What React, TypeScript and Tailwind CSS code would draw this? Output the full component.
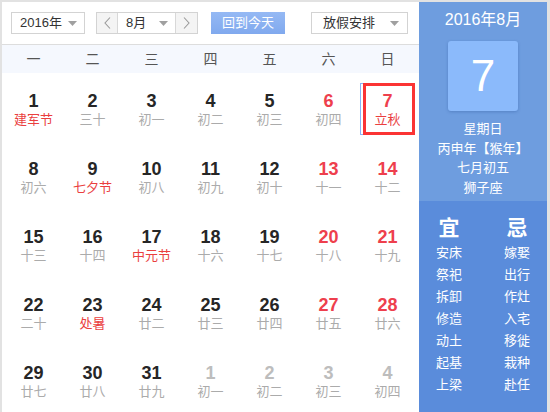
import React from "react";

type Cell = { d: number; l: string; numRed?: boolean; lRed?: boolean; gray?: boolean; sel?: boolean };

const rows: Cell[][] = [
  [
    { d: 1, l: "建军节", lRed: true },
    { d: 2, l: "三十" },
    { d: 3, l: "初一" },
    { d: 4, l: "初二" },
    { d: 5, l: "初三" },
    { d: 6, l: "初四", numRed: true },
    { d: 7, l: "立秋", numRed: true, lRed: true, sel: true },
  ],
  [
    { d: 8, l: "初六" },
    { d: 9, l: "七夕节", lRed: true },
    { d: 10, l: "初八" },
    { d: 11, l: "初九" },
    { d: 12, l: "初十" },
    { d: 13, l: "十一", numRed: true },
    { d: 14, l: "十二", numRed: true },
  ],
  [
    { d: 15, l: "十三" },
    { d: 16, l: "十四" },
    { d: 17, l: "中元节", lRed: true },
    { d: 18, l: "十六" },
    { d: 19, l: "十七" },
    { d: 20, l: "十八", numRed: true },
    { d: 21, l: "十九", numRed: true },
  ],
  [
    { d: 22, l: "二十" },
    { d: 23, l: "处暑", lRed: true },
    { d: 24, l: "廿二" },
    { d: 25, l: "廿三" },
    { d: 26, l: "廿四" },
    { d: 27, l: "廿五", numRed: true },
    { d: 28, l: "廿六", numRed: true },
  ],
  [
    { d: 29, l: "廿七" },
    { d: 30, l: "廿八" },
    { d: 31, l: "廿九" },
    { d: 1, l: "初一", gray: true },
    { d: 2, l: "初二", gray: true },
    { d: 3, l: "初三", gray: true },
    { d: 4, l: "初四", gray: true },
  ],
];

const weekdays = ["一", "二", "三", "四", "五", "六", "日"];
const yi = ["安床", "祭祀", "拆卸", "修造", "动土", "起基", "上梁"];
const ji = ["嫁娶", "出行", "作灶", "入宅", "移徙", "栽种", "赴任"];

const font = { fontFamily: '"Liberation Sans", Arial, "Noto Sans CJK SC", sans-serif' };

function Tri() {
  return (
    <svg width="9" height="5" viewBox="0 0 9 5">
      <polygon points="0,0 9,0 4.5,5" fill="#a0a0a0" />
    </svg>
  );
}

function Chev({ dir }: { dir: "l" | "r" }) {
  return (
    <svg width="7" height="12" viewBox="0 0 7 12">
      <polyline
        points={dir === "l" ? "6,0.5 1,6 6,11.5" : "1,0.5 6,6 1,11.5"}
        fill="none"
        stroke="#9a9a9a"
        strokeWidth="1.1"
      />
    </svg>
  );
}

export default function App() {
  return (
    <div
      className="w-[550px] h-[412px] flex border-t-2 border-l-2 border-r-[3px] border-[#e2e2e2] bg-white overflow-hidden"
      style={font}
    >
      <div className="w-[417px] flex flex-col">
        <div className="h-[43px] border-b border-[#dddddd] flex items-center pl-[9px] shrink-0">
          <div className="w-[74px] h-[22px] border border-[#d3d3d3] flex items-center justify-between pl-[8px] pr-[7px] text-[13px] text-[#333]">
            <span>2016年</span>
            <Tri />
          </div>
          <div className="ml-[11px] h-[22px] flex border border-[#d3d3d3]">
            <div className="w-[21px] bg-[#f4f4f4] border-r border-[#d8d8d8] flex items-center justify-center">
              <Chev dir="l" />
            </div>
            <div className="w-[57px] flex items-center justify-between pl-[8px] pr-[7px] text-[13px] text-[#333]">
              <span>8月</span>
              <Tri />
            </div>
            <div className="w-[22px] bg-[#f4f4f4] border-l border-[#d8d8d8] flex items-center justify-center">
              <Chev dir="r" />
            </div>
          </div>
          <div className="ml-[13px] w-[74px] h-[22px] bg-gradient-to-b from-[#95b9f4] to-[#80a9ee] text-white text-[13px] flex items-center justify-center">
            回到今天
          </div>
          <div className="ml-[26px] w-[97px] h-[22px] border border-[#d3d3d3] flex items-center justify-between pl-[11px] pr-[8px] text-[13px] text-[#333]">
            <span>放假安排</span>
            <Tri />
          </div>
        </div>
        <div className="h-[28px] bg-[#f5f8fe] shrink-0 pl-[2px]">
          <div className="w-[413px] h-full grid grid-cols-7 items-center">
            {weekdays.map((w) => (
              <div key={w} className="text-center text-[14px] text-[#555]">
                {w}
              </div>
            ))}
          </div>
        </div>
        <div className="pl-[2px] flex-1">
          <div className="w-[413px] grid grid-cols-7 auto-rows-[68px]">
            {rows.flat().map((c, i) => (
              <div key={i} className="relative flex flex-col items-center pt-[18px]">
                {c.sel && (
                  <>
                    <div className="absolute left-[2px] top-[10px] w-[55px] h-[52px] border border-[#8ab4f8]" />
                    <div className="absolute left-[5px] top-[10px] w-[52px] h-[52px] border-[3px] border-[#fb3434]" />
                  </>
                )}
                <div
                  className={
                    "relative text-[18px] leading-[20px] font-bold " +
                    (c.gray ? "text-[#bdbdbd]" : c.numRed ? "text-[#ee3f4d]" : "text-[#262626]")
                  }
                >
                  {c.d}
                </div>
                <div
                  className={
                    "relative text-[13px] leading-[17px] " +
                    (c.lRed ? "text-[#ea3f3f]" : "text-[#ababab]")
                  }
                >
                  {c.l}
                </div>
              </div>
            ))}
          </div>
        </div>
      </div>
      <div className="flex-1 flex flex-col text-white">
        <div className="h-[199px] bg-[#6e9ddf] flex flex-col items-center shrink-0">
          <div className="text-[16px] leading-[20px] mt-[8px]">2016年8月</div>
          <div className="mt-[11px] w-[70px] h-[70px] rounded-[3px] bg-[#8bbafb] shadow-[0_1px_3px_rgba(40,80,150,0.35)] flex items-center justify-center text-[44px] leading-none">
            7
          </div>
          <div className="mt-[8px] flex flex-col items-center text-[13px] leading-[19.5px]">
            <div>星期日</div>
            <div>丙申年【猴年】</div>
            <div>七月初五</div>
            <div>狮子座</div>
          </div>
        </div>
        <div className="flex-1 bg-[#5a8cdb] flex justify-center gap-[38px] pt-[15px]">
          <div className="flex flex-col items-center w-[30px]">
            <div className="text-[21px] leading-[24px] font-bold mb-[2px]">宜</div>
            {yi.map((t) => (
              <div key={t} className="text-[13px] leading-[22px]">
                {t}
              </div>
            ))}
          </div>
          <div className="flex flex-col items-center w-[30px]">
            <div className="text-[21px] leading-[24px] font-bold mb-[2px]">忌</div>
            {ji.map((t) => (
              <div key={t} className="text-[13px] leading-[22px]">
                {t}
              </div>
            ))}
          </div>
        </div>
      </div>
    </div>
  );
}
